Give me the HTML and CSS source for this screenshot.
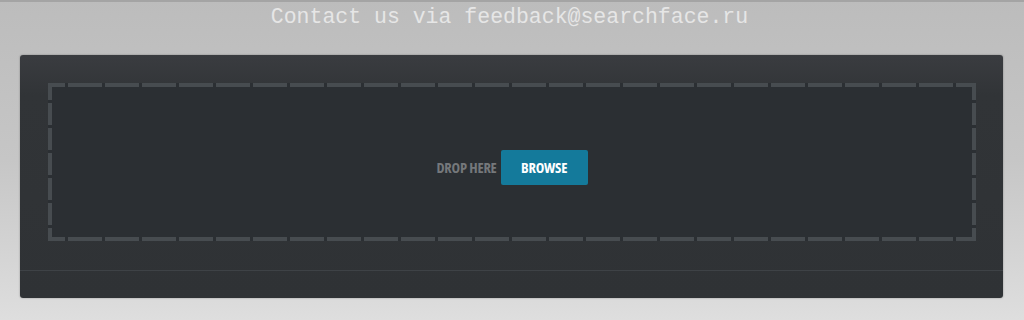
FILE: index.html
```html
<!DOCTYPE html>
<html lang="en">
<head>
    <meta charset="UTF-8">
    <title>SearchFace</title>
    <link rel="stylesheet" href="styles.css">
</head>
<body>
    <div class="contact">Contact us via feedback@searchface.ru</div>

    <div class="panel">
        <div class="panel-body">
            <div class="dropzone">
                <span class="drop-label">DROP HERE</span>
                <div class="browse-btn">BROWSE</div>
            </div>
        </div>
        <div class="panel-footer"></div>
    </div>
</body>
</html>
```

FILE: styles.css
```css
html {
    height: 100%;
}
body {
    margin: 0;
    padding: 0;
    min-height: 100%;
    background: linear-gradient(to bottom, #bcbcbc 0%, #c6c6c6 50%, #dedede 100%);
    border-top: 2px solid #a4a4a4;
    box-sizing: border-box;
    font-family: "Liberation Sans", Arial, sans-serif;
}
.contact {
    font-family: "Liberation Mono", "Courier New", monospace;
    font-size: 21.5px;
    line-height: 26px;
    color: #e6e6e6;
    text-align: center;
    padding: 2px 5px 0 0;
    height: 51px;
}
.panel {
    margin: 0 21px 0 20px;
    background: linear-gradient(to bottom, #3a3c40 0px, #313437 40px, #2f3235 100%);
    border-radius: 3px;
    box-shadow: 0 0 2px rgba(0, 0, 0, 0.35);
}
.panel-body {
    padding: 28px 27px 29px 28px;
    border-bottom: 1px solid #3e4246;
}
/* рамка с длинными штрихами */
.dropzone {
    height: 158px;
    box-sizing: border-box;
    padding-top: 11px;
    display: flex;
    align-items: center;
    justify-content: center;
    gap: 4px;
    background:
        linear-gradient(90deg, #474c50 34px, transparent 34px) -17px top / 37px 4px repeat-x,
        linear-gradient(90deg, #474c50 34px, transparent 34px) -17px bottom / 37px 4px repeat-x,
        linear-gradient(180deg, #474c50 22px, transparent 22px) left -5px / 4px 25px repeat-y,
        linear-gradient(180deg, #474c50 22px, transparent 22px) right -5px / 4px 25px repeat-y,
        #2b2f33;
}
.drop-label {
    font-family: "Open Sans", sans-serif;
    font-stretch: 75%;
    font-weight: 700;
    font-size: 14.5px;
    color: #75787b;
    letter-spacing: -0.2px;
}
.browse-btn {
    width: 87px;
    height: 35px;
    background-color: #147a9b;
    border-radius: 2px;
    display: flex;
    align-items: center;
    justify-content: center;
    color: #ffffff;
    font-family: "Open Sans", sans-serif;
    font-stretch: 75%;
    font-weight: 700;
    font-size: 14.5px;
    letter-spacing: -0.2px;
}
.panel-footer {
    height: 27px;
}
```
